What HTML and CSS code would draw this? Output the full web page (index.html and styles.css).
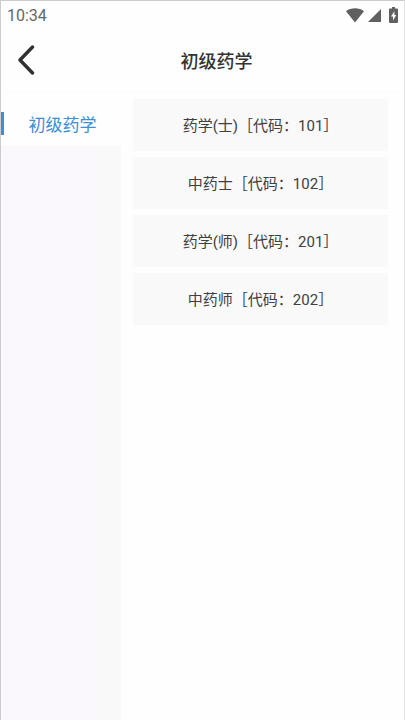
FILE: index.html
```html
<!DOCTYPE html>
<html lang="zh-CN">
<head>
    <meta charset="UTF-8">
    <meta name="viewport" content="width=device-width, initial-scale=1.0">
    <title>初级药学</title>
    <link rel="stylesheet" href="styles.css">
</head>
<body>

    <div class="status-bar">
        <span class="time">10:34</span>
        <div class="status-icons">
            <svg width="18" height="15" viewBox="0 0 18 15"><path d="M0 3.2C5 -.6 13 -.6 18 3.2L9 14.5z"/></svg>
            <svg width="13" height="15" viewBox="0 0 13 15"><path d="M13 1v13H0z"/></svg>
            <svg class="battery" width="9" height="16" viewBox="0 0 9 16"><path fill-rule="evenodd" d="M3 0h3v1.6h2q1 0 1 1V15q0 1-1 1H1q-1 0-1-1V2.6q0-1 1-1h2zM5.4 4.2L2 9.4h2v4L7.2 8H5.4z"/></svg>
        </div>
    </div>

    <header class="header">
        <button class="back" type="button" aria-label="返回">
            <svg width="18" height="30" viewBox="0 0 18 30"><path d="M15.5 2L3 15l12.5 13"/></svg>
        </button>
        <h1>初级药学</h1>
    </header>

    <main class="content">
        <nav class="sidebar">
            <a class="tab active" href="#list">初级药学</a>
        </nav>
        <div class="list" id="list">
            <button class="item" type="button">药学(士)［代码：101］</button>
            <button class="item" type="button">中药士［代码：102］</button>
            <button class="item" type="button">药学(师)［代码：201］</button>
            <button class="item" type="button">中药师［代码：202］</button>
        </div>
    </main>

</body>
</html>
```

FILE: styles.css
```css
* {
    box-sizing: border-box;
}

body {
    display: flex;
    flex-direction: column;
    min-height: 100vh;
    margin: 0;
    border: 1px solid #ccc;
    border-right-color: #e2e2e2;
    border-bottom: none;
    background: #fefefe;
    color: #333;
    font-family: Roboto, "Noto Sans CJK SC", sans-serif;
}

button {
    border: none;
    color: inherit;
    font-family: inherit;
    cursor: pointer;
}

.status-bar {
    display: flex;
    align-items: center;
    justify-content: space-between;
    height: 28px;
    padding: 0 6px;
    color: #666;
    font-size: 16px;
}

.status-icons {
    display: flex;
    align-items: center;
    gap: 4px;
    fill: #606060;
}

.battery {
    margin-left: 4px;
}

.header {
    display: grid;
    grid-template-columns: 48px 1fr 36px;
    align-items: center;
    height: 63px;
    padding-left: 16px;
    border-bottom: 1px solid #fbfbfb;
}

.header h1 {
    margin: 0;
    font-size: 18px;
    font-weight: 500;
    text-align: center;
}

.back {
    display: flex;
    padding: 0;
    background: none;
}

.back svg {
    fill: none;
    stroke: #303030;
    stroke-width: 3.4;
    stroke-linecap: round;
    stroke-linejoin: round;
}

.content {
    display: flex;
    flex: 1;
}

.sidebar {
    width: 120px;
    background: linear-gradient(to right, #faf8fc 96px, #f9f9f9 96px);
}

.tab {
    display: flex;
    align-items: center;
    justify-content: center;
    height: 54px;
    padding: 8px 0 0 3px;
    color: #3a8fd6;
    font-size: 17px;
    text-decoration: none;
}

.active {
    position: relative;
    background: #fefefe;
}

.active::before {
    content: "";
    position: absolute;
    left: 0;
    width: 3px;
    height: 23px;
    background: #3a8fd6;
}

.list {
    display: flex;
    flex: 1;
    flex-direction: column;
    gap: 6px;
    padding: 7px 16px 7px 12px;
}

.item {
    height: 52px;
    padding: 0 0 2px;
    background: #f9f9f9;
    color: #404040;
    font-size: 15px;
}
```
